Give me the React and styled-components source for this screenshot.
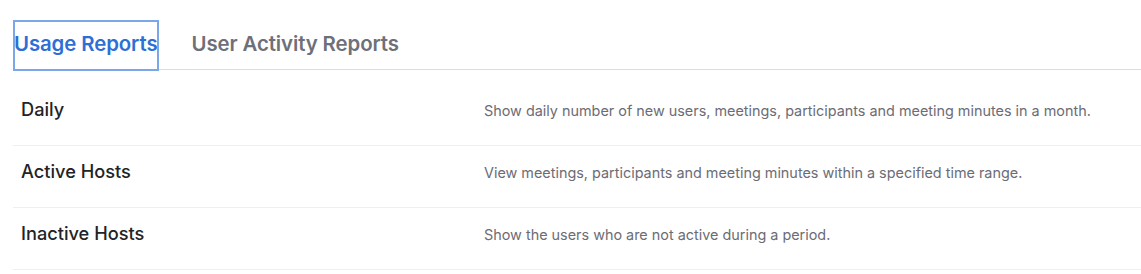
import React, { useState } from "react";
import styled, { createGlobalStyle } from "styled-components";

const Global = createGlobalStyle`
  html, body { margin: 0; padding: 0; background: #fff; }
  body { font-family: Inter, "Noto Sans", Arial, sans-serif; -webkit-font-smoothing: antialiased; }
`;

const Page = styled.div`
  padding: 20px 0 0 13px;
`;

const TabBar = styled.div`
  display: flex;
  align-items: stretch;
  gap: 32px;
  border-bottom: 1.5px solid #dcdde0;
  height: 50px;
  box-sizing: border-box;
`;

const Tab = styled.button`
  appearance: none;
  background: none;
  border: none;
  margin: 0 0 -1.5px 0;
  padding: 0 1px 1px;
  font-family: inherit;
  font-size: 20.4px;
  font-weight: 600;
  letter-spacing: -0.1px;
  color: ${(p) => (p.$active ? "#2e6fd6" : "#6e7079")};
  cursor: pointer;
  box-sizing: border-box;
  border-bottom: 2px solid ${(p) => (p.$active ? "#2e6fd6" : "transparent")};
  outline: ${(p) => (p.$active ? "2px solid #7aa6ea" : "none")};
  outline-offset: -2px;
`;

const List = styled.div`
  margin-top: 14px;
  display: flex;
  flex-direction: column;
`;

const Row = styled.div`
  display: grid;
  grid-template-columns: 463px 1fr;
  align-items: baseline;
  height: 62px;
  box-sizing: border-box;
  padding: 14px 0 0 8px;
  border-bottom: 1px solid #efeff1;
`;

const Label = styled.div`
  font-size: 18.2px;
  line-height: 22px;
  font-weight: 500;
  color: #222326;
`;

const Desc = styled.div`
  font-size: 14.4px;
  line-height: 22px;
  color: #6c6c75;
`;

const rows = [
  { label: "Daily", desc: "Show daily number of new users, meetings, participants and meeting minutes in a month." },
  { label: "Active Hosts", desc: "View meetings, participants and meeting minutes within a specified time range." },
  { label: "Inactive Hosts", desc: "Show the users who are not active during a period." },
];

export default function App() {
  const [tab, setTab] = useState(0);
  return (
    <Page>
      <Global />
      <TabBar>
        <Tab $active={tab === 0} onClick={() => setTab(0)}>Usage Reports</Tab>
        <Tab $active={tab === 1} onClick={() => setTab(1)}>User Activity Reports</Tab>
      </TabBar>
      <List>
        {rows.map((r) => (
          <Row key={r.label}>
            <Label>{r.label}</Label>
            <Desc>{r.desc}</Desc>
          </Row>
        ))}
      </List>
    </Page>
  );
}
